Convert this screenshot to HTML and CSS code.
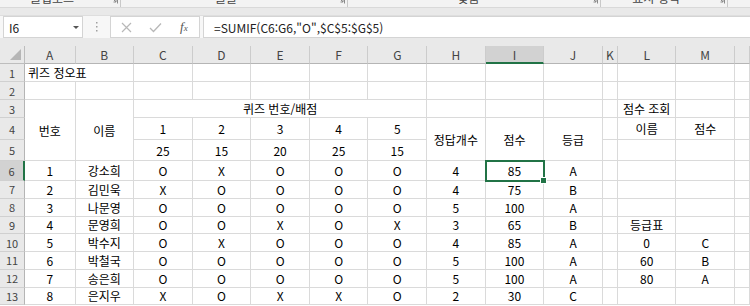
FILE: index.html
```html
<!DOCTYPE html>
<html lang="ko">
<head>
<meta charset="utf-8">
<title>퀴즈 정오표</title>
<link rel="stylesheet" href="styles.css">
</head>
<body>
<div class="ribbon">
  <div class="grp g1"><span class="glabel">클립보드</span><svg class="launch" width="8" height="8" viewBox="0 0 8 8"><path d="M0.5 0.5H7.5V7.5" fill="none" stroke="#8a8a8a"/><path d="M2 2L6 6M3.5 6H6V3.5" fill="none" stroke="#8a8a8a"/></svg></div>
  <div class="grp g2"><span class="glabel">글꼴</span><svg class="launch" width="8" height="8" viewBox="0 0 8 8"><path d="M0.5 0.5H7.5V7.5" fill="none" stroke="#8a8a8a"/><path d="M2 2L6 6M3.5 6H6V3.5" fill="none" stroke="#8a8a8a"/></svg></div>
  <div class="grp g3"><span class="glabel">맞춤</span><svg class="launch" width="8" height="8" viewBox="0 0 8 8"><path d="M0.5 0.5H7.5V7.5" fill="none" stroke="#8a8a8a"/><path d="M2 2L6 6M3.5 6H6V3.5" fill="none" stroke="#8a8a8a"/></svg></div>
  <div class="grp g4"><span class="glabel">표시 형식</span><svg class="launch" width="8" height="8" viewBox="0 0 8 8"><path d="M0.5 0.5H7.5V7.5" fill="none" stroke="#8a8a8a"/><path d="M2 2L6 6M3.5 6H6V3.5" fill="none" stroke="#8a8a8a"/></svg></div>
</div>
<div class="band"></div>
<div class="fbar">
  <div class="namebox"><span>I6</span><span class="arrow"></span></div>
  <div class="dots"><svg width="2" height="10" viewBox="0 0 2 10"><rect x="0" y="0" width="1.5" height="1.5" fill="#a0a0a0"/><rect x="0" y="4" width="1.5" height="1.5" fill="#a0a0a0"/><rect x="0" y="8" width="1.5" height="1.5" fill="#a0a0a0"/></svg></div>
  <div class="iconbox">
    <svg class="ico" width="11" height="11" viewBox="0 0 11 11"><path d="M1 1L10 10M10 1L1 10" stroke="#b8b8b8" stroke-width="1.2" fill="none"/></svg>
    <svg class="ico" width="13" height="11" viewBox="0 0 13 11"><path d="M1 6L4.5 9.5L12 1.5" stroke="#b8b8b8" stroke-width="1.3" fill="none"/></svg>
    <span class="fx"><i>f</i><span class="x">x</span></span>
  </div>
  <div class="formula">=SUMIF(C6:G6,"O",$C$5:$G$5)</div>
</div>
<div class="gap"></div>
<div class="sheet">
  <div class="corner"><svg width="11" height="11" viewBox="0 0 11 11"><path d="M11 0V11H0Z" fill="#b6b6b6"/></svg></div>
  <div class="h">A</div><div class="h">B</div><div class="h">C</div><div class="h">D</div><div class="h">E</div><div class="h">F</div><div class="h">G</div><div class="h">H</div><div class="h sel">I</div><div class="h">J</div><div class="h">K</div><div class="h">L</div><div class="h">M</div><div class="h"></div>

  <div class="r">1</div>
  <div class="c left span2">퀴즈 정오표</div>
  <div class="c"></div><div class="c"></div><div class="c"></div><div class="c"></div><div class="c"></div><div class="c"></div><div class="c"></div><div class="c"></div><div class="c"></div><div class="c"></div><div class="c"></div><div class="c"></div>

  <div class="r">2</div>
  <div class="c"></div><div class="c"></div><div class="c"></div><div class="c"></div><div class="c"></div><div class="c"></div><div class="c"></div><div class="c"></div><div class="c"></div><div class="c"></div><div class="c"></div><div class="c"></div><div class="c"></div><div class="c"></div>

  <div class="r">3</div>
  <div class="c rspan3">번호</div>
  <div class="c rspan3">이름</div>
  <div class="c cspan5">퀴즈 번호/배점</div>
  <div class="c"></div><div class="c"></div><div class="c"></div><div class="c"></div>
  <div class="c">점수 조회</div><div class="c"></div><div class="c"></div>

  <div class="r">4</div>
  <div class="c">1</div><div class="c">2</div><div class="c">3</div><div class="c">4</div><div class="c">5</div>
  <div class="c rspan2">정답개수</div><div class="c rspan2">점수</div><div class="c rspan2">등급</div>
  <div class="c"></div><div class="c">이름</div><div class="c">점수</div><div class="c"></div>

  <div class="r">5</div>
  <div class="c">25</div><div class="c">15</div><div class="c">20</div><div class="c">25</div><div class="c">15</div>
  <div class="c"></div><div class="c"></div><div class="c"></div><div class="c"></div>

  <div class="r rsel">6</div>
  <div class="c">1</div><div class="c">강소희</div><div class="c">O</div><div class="c">X</div><div class="c">O</div><div class="c">O</div><div class="c">O</div><div class="c">4</div><div class="c active">85</div><div class="c">A</div><div class="c"></div><div class="c"></div><div class="c"></div><div class="c"></div>

  <div class="r">7</div>
  <div class="c">2</div><div class="c">김민욱</div><div class="c">X</div><div class="c">O</div><div class="c">O</div><div class="c">O</div><div class="c">O</div><div class="c">4</div><div class="c">75</div><div class="c">B</div><div class="c"></div><div class="c"></div><div class="c"></div><div class="c"></div>

  <div class="r">8</div>
  <div class="c">3</div><div class="c">나문영</div><div class="c">O</div><div class="c">O</div><div class="c">O</div><div class="c">O</div><div class="c">O</div><div class="c">5</div><div class="c">100</div><div class="c">A</div><div class="c"></div><div class="c"></div><div class="c"></div><div class="c"></div>

  <div class="r">9</div>
  <div class="c">4</div><div class="c">문영희</div><div class="c">O</div><div class="c">O</div><div class="c">X</div><div class="c">O</div><div class="c">X</div><div class="c">3</div><div class="c">65</div><div class="c">B</div><div class="c"></div><div class="c">등급표</div><div class="c"></div><div class="c"></div>

  <div class="r">10</div>
  <div class="c">5</div><div class="c">박수지</div><div class="c">O</div><div class="c">X</div><div class="c">O</div><div class="c">O</div><div class="c">O</div><div class="c">4</div><div class="c">85</div><div class="c">A</div><div class="c"></div><div class="c">0</div><div class="c">C</div><div class="c"></div>

  <div class="r">11</div>
  <div class="c">6</div><div class="c">박철국</div><div class="c">O</div><div class="c">O</div><div class="c">O</div><div class="c">O</div><div class="c">O</div><div class="c">5</div><div class="c">100</div><div class="c">A</div><div class="c"></div><div class="c">60</div><div class="c">B</div><div class="c"></div>

  <div class="r">12</div>
  <div class="c">7</div><div class="c">송은희</div><div class="c">O</div><div class="c">O</div><div class="c">O</div><div class="c">O</div><div class="c">O</div><div class="c">5</div><div class="c">100</div><div class="c">A</div><div class="c"></div><div class="c">80</div><div class="c">A</div><div class="c"></div>

  <div class="r">13</div>
  <div class="c">8</div><div class="c">은지우</div><div class="c">X</div><div class="c">O</div><div class="c">X</div><div class="c">X</div><div class="c">O</div><div class="c">2</div><div class="c">30</div><div class="c">C</div><div class="c"></div><div class="c"></div><div class="c"></div><div class="c"></div>
</div>
</body>
</html>
```
FILE: styles.css
```css
* { box-sizing: border-box; }
html, body { margin: 0; padding: 0; }
body {
  width: 750px;
  height: 306px;
  overflow: hidden;
  background: #ffffff;
  font-family: "Noto Sans CJK KR", "Noto Sans", sans-serif;
  color: #000;
}

/* ribbon bottom strip */
.ribbon {
  height: 8px;
  background: #f3f3f3;
  border-bottom: 1px solid #d9d9d9;
  display: flex;
  overflow: hidden;
}
.grp {
  display: flex;
  align-items: flex-start;
  height: 8px;
  border-right: 1px solid #c9c9c9;
}
.glabel {
  font-size: 12px;
  line-height: 16px;
  margin-top: -10px;
  color: #444;
  text-align: center;
  white-space: nowrap;
}
.launch { margin-top: -4px; }
.g1 { width: 121px; }
.g1 .glabel { width: 104px; }
.g1 .launch { margin-left: 6px; }
.g2 { width: 227px; }
.g2 .glabel { width: 210px; }
.g2 .launch { margin-left: 6px; }
.g3 { width: 253px; }
.g3 .glabel { width: 241px; }
.g3 .launch { margin-left: 1px; }
.g4 { width: 127px; }
.g4 .glabel { width: 110px; }
.g4 .launch { margin-left: 6px; }

.band {
  height: 8px;
  background: #e9e9e9;
  border-bottom: 1px solid #dedede;
}

/* formula bar */
.fbar {
  height: 22px;
  display: flex;
  background: #f7f7f7;
}
.namebox {
  margin-left: 3px;
  width: 80px;
  background: #fff;
  border: 1px solid #d4d4d4;
  display: flex;
  align-items: center;
  justify-content: space-between;
  padding: 0 3px 0 5px;
  font-size: 12px;
  color: #222;
}
.arrow {
  width: 0; height: 0;
  border-left: 3px solid transparent;
  border-right: 3px solid transparent;
  border-top: 3px solid #555;
}
.dots {
  width: 27px;
  display: flex;
  align-items: center;
  justify-content: center;
}
.iconbox {
  width: 90px;
  background: #fff;
  border: 1px solid #d4d4d4;
  display: flex;
  align-items: center;
  padding-left: 10px;
  gap: 17px;
}
.fx {
  font-family: "Liberation Serif", serif;
  font-size: 13px;
  color: #555;
  margin-left: 1px;
}
.fx .x { font-size: 9px; font-style: italic; }
.formula {
  flex: 1;
  margin-left: 3px;
  background: #fff;
  border: 1px solid #d4d4d4;
  border-right: none;
  display: flex;
  align-items: center;
  padding-left: 10px;
  font-size: 12px;
  color: #222;
  white-space: nowrap;
}
.gap {
  height: 8px;
  background: #e9e9e9;
}

/* sheet grid */
.sheet {
  display: grid;
  grid-template-columns: 25px 50.5px repeat(9, 58.6px) 15px 58.6px 58.6px 1fr;
  grid-template-rows: 18px 18px 18px 18px 22px 21px 20px repeat(7, 17.75px);
}
.corner {
  background: #e9e9e9;
  border-right: 1px solid #bdbdbd;
  border-bottom: 1px solid #bdbdbd;
  display: flex;
  align-items: flex-end;
  justify-content: flex-end;
  padding: 0 3px 3px 0;
}
.h {
  background: #e9e9e9;
  border-right: 1px solid #cccccc;
  border-bottom: 1px solid #b5b5b5;
  display: flex;
  align-items: center;
  justify-content: center;
  font-size: 12px;
  color: #444;
}
.h.sel {
  background: #d2d2d2;
  border-bottom: 2px solid #217346;
}
.r {
  background: #e9e9e9;
  border-right: 1px solid #b5b5b5;
  border-bottom: 1px solid #d0d0d0;
  display: flex;
  align-items: center;
  justify-content: center;
  font-size: 11px;
  color: #444;
}
.r.rsel {
  background: #d2d2d2;
  border-right: 2px solid #217346;
}
.c {
  border-right: 1px solid #dadada;
  border-bottom: 1px solid #dadada;
  display: flex;
  align-items: center;
  justify-content: center;
  font-size: 12px;
  white-space: nowrap;
  overflow: hidden;
}
.c.left { justify-content: flex-start; padding-left: 3px; }
.span2 { grid-column: span 2; }
.cspan5 { grid-column: span 5; }
.rspan3 { grid-row: span 3; }
.rspan2 { grid-row: span 2; }
.c.active {
  position: relative;
  overflow: visible;
  outline: 2px solid #217346;
  outline-offset: -1px;
}
.c.active::after {
  content: "";
  position: absolute;
  right: -4px;
  bottom: -4px;
  width: 5px;
  height: 5px;
  background: #217346;
  border: 1px solid #fff;
  box-sizing: content-box;
}
```
